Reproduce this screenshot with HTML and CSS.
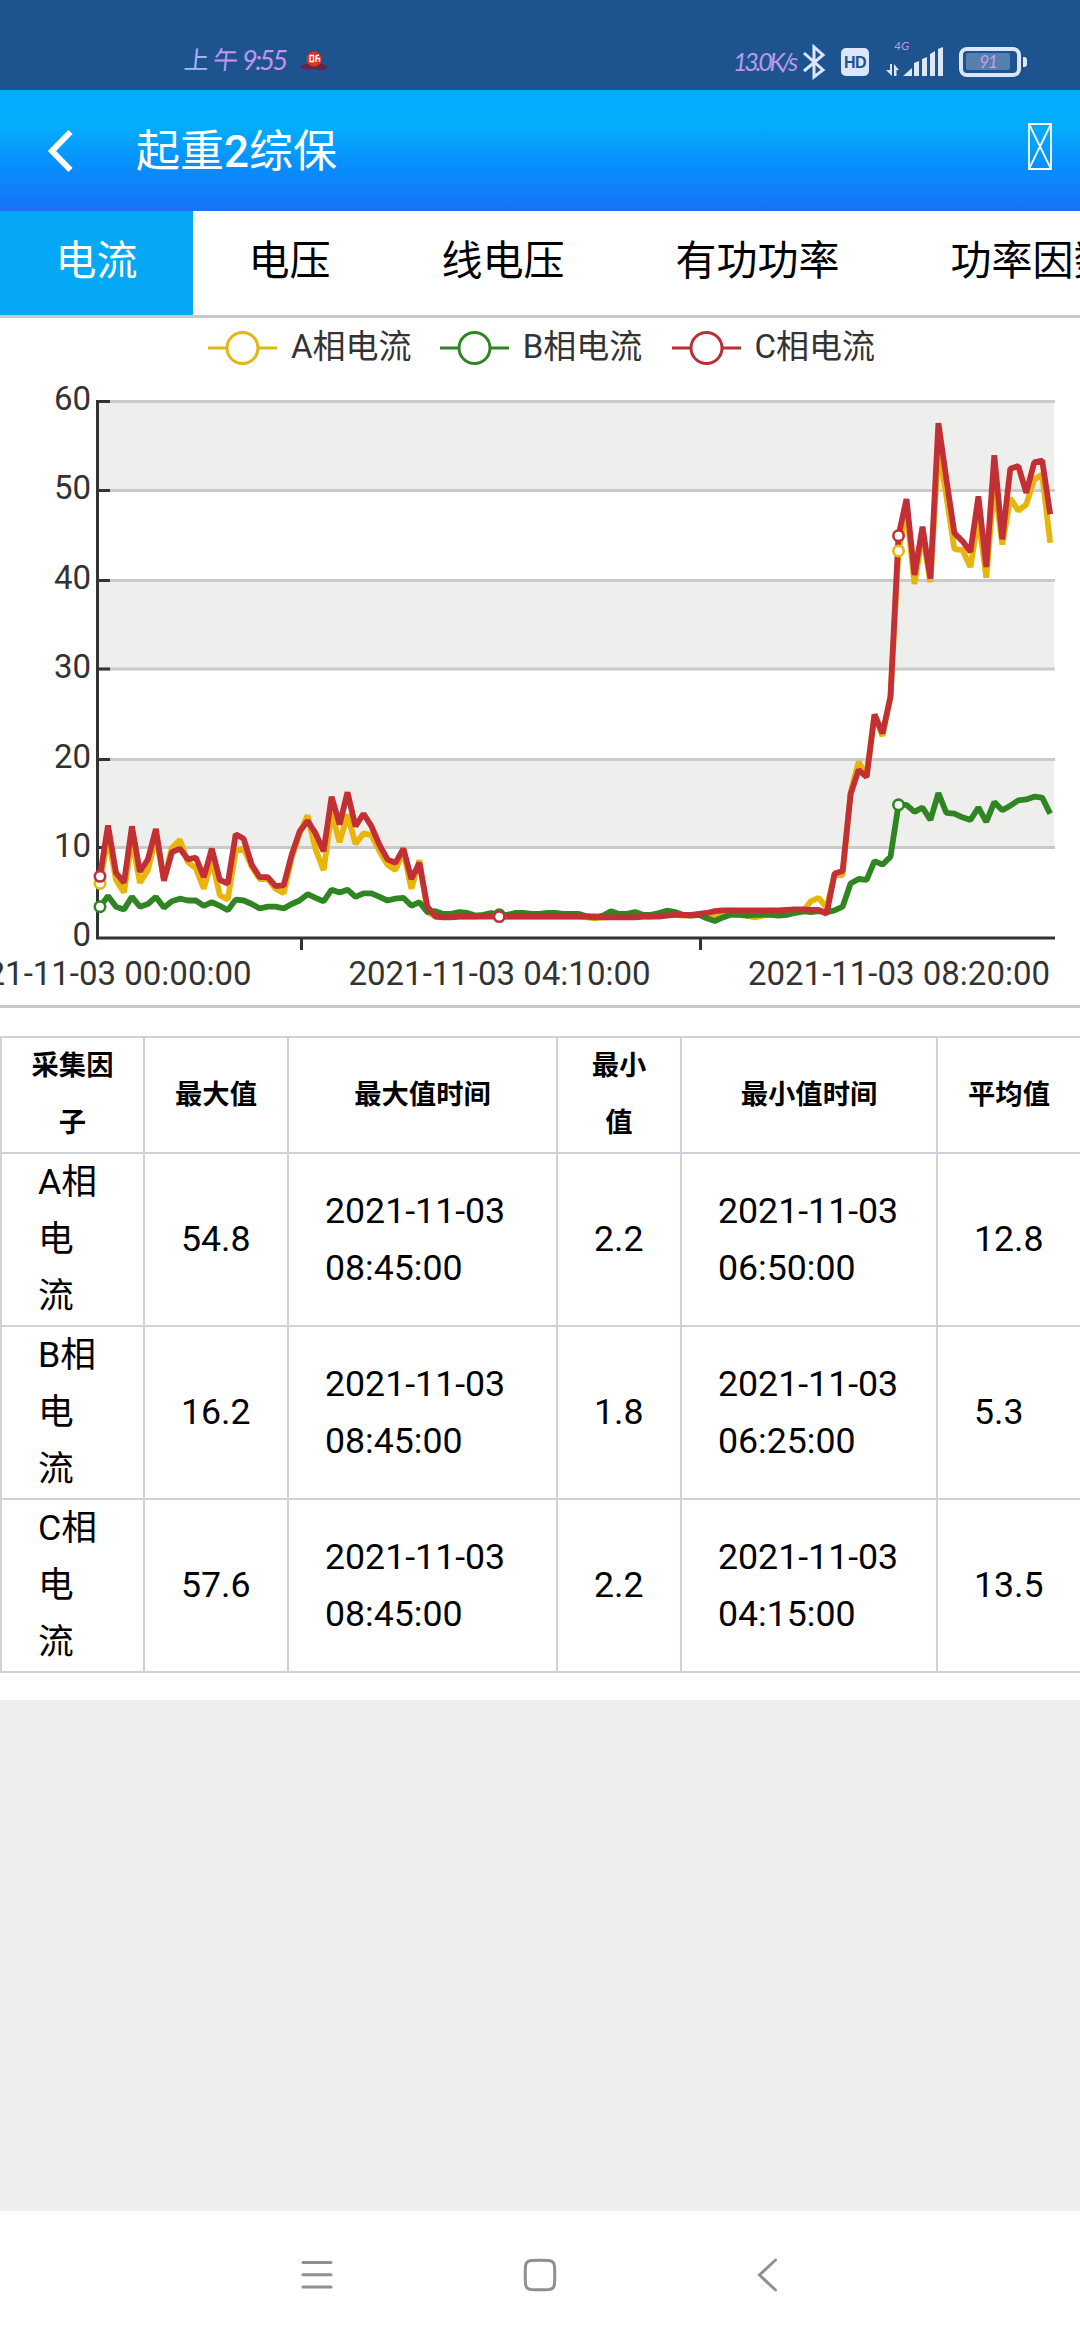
FILE: index.html
```html
<!DOCTYPE html>
<html lang="zh-CN">
<head>
<meta charset="utf-8">
<title>起重2综保</title>
<link rel="stylesheet" href="styles.css">
</head>
<body>
<div class="screen">
  <div class="status">
    <div class="clock"><span class="han">上</span><span class="han pink">午</span><span class="digits">9:55</span></div>
    <svg class="app-dot" width="30" height="24" viewBox="0 0 30 24">
      <path d="M1 17L6 15L23 15L29 18L26 21L4 20Z" fill="#6b2345"/>
      <circle cx="15" cy="10" r="7.5" fill="#e5301d"/>
      <path d="M11 6.5H14.5V12.5H11ZM20 6L17 7V13M17 9.5H20.5V13" fill="none" stroke="#fff" stroke-width="1.4"/>
    </svg>
    <div class="speed">13.0K/s</div>
    <svg class="bt" width="24" height="36" viewBox="0 0 24 36"><path d="M2 9L21 26L12 33V3L21 11L2 27" fill="none" stroke="#dce6fa" stroke-width="3"/></svg>
    <div class="hd">HD</div>
    <div class="signal">
      <span class="net">4G</span>
      <svg width="58" height="30" viewBox="0 0 58 30">
        <g fill="#dce6fa"><path d="M17 29L26 21V29Z"/><path d="M28 16L33 14V29H28ZM36 12L41 10V29H36ZM44 7L49 4V29H44ZM52 2L57 0V29H52Z"/>
        <path d="M4 17H6V29L0 23H4ZM8 29V17L13 23H10.500V29Z"/></g>
      </svg>
    </div>
    <div class="battery"><div class="level">91</div></div>
    <div class="cap"></div>
  </div>

  <div class="header">
    <svg class="back" width="30" height="44" viewBox="0 0 30 44"><path d="M25.500 3L7 22L25.500 41" fill="none" stroke="#fff" stroke-width="6"/></svg>
    <div class="title">起重<b>2</b>综保</div>
    <svg class="box" width="26" height="50" viewBox="0 0 26 50"><path d="M2 2H24V47H2ZL24 47M24 2L2 47" fill="none" stroke="#fff" stroke-width="1.8"/></svg>
  </div>

  <div class="tabs">
    <div class="tab active">电流</div><div class="tab">电压</div><div class="tab">线电压</div><div class="tab">有功功率</div><div class="tab">功率因数</div>
  </div>

  <div class="chart">
    <div class="legend">
      <div class="item"><svg width="70" height="36" viewBox="0 0 70 36"><path d="M0 18H69" stroke="#e0b713" stroke-width="3"/><circle cx="34.500" cy="18" r="15.500" fill="#fff" stroke="#e0b713" stroke-width="3"/></svg><span>A相电流</span></div>
      <div class="item"><svg width="70" height="36" viewBox="0 0 70 36"><path d="M0 18H69" stroke="#2f8424" stroke-width="3"/><circle cx="34.500" cy="18" r="15.500" fill="#fff" stroke="#2f8424" stroke-width="3"/></svg><span>B相电流</span></div>
      <div class="item"><svg width="70" height="36" viewBox="0 0 70 36"><path d="M0 18H69" stroke="#b92f37" stroke-width="3"/><circle cx="34.500" cy="18" r="15.500" fill="#fff" stroke="#b92f37" stroke-width="3"/></svg><span>C相电流</span></div>
    </div>
    <svg class="plot" width="1080" height="625" viewBox="0 380 1080 625">
      <g fill="#eeeeed"><rect x="98" y="401" width="956" height="89"/><rect x="98" y="580" width="956" height="89"/><rect x="98" y="759" width="956" height="89"/></g>
      <path class="grid" d="M98 401.500H1055M98 490.500H1055M98 580.500H1055M98 669H1055M98 759.500H1055M98 847.500H1055"/>
      <path class="axis" d="M97.500 400V939M96 938H1055M96 401.500H110M96 490.500H110M96 580.500H110M96 669H110M96 759.500H110M96 847.500H110M301.500 938V950M700.500 938V950"/>
      <g class="labels" text-anchor="end"><text x="91" y="410">60</text><text x="91" y="499">50</text><text x="91" y="589">40</text><text x="91" y="678">30</text><text x="91" y="767.500">20</text><text x="91" y="856.500">10</text><text x="91" y="946">0</text></g>
      <g class="labels" text-anchor="middle"><text x="100.500" y="984.500">2021-11-03 00:00:00</text><text x="499.500" y="984.500">2021-11-03 04:10:00</text><text x="899" y="984.500">2021-11-03 08:20:00</text></g>
      <g id="series"></g>
    </svg>
  </div>

  <div class="table-wrap">
    <table>
      <colgroup><col class="c1"><col class="c2"><col class="c3"><col class="c4"><col class="c5"><col class="c6"></colgroup>
      <tr class="head"><th>采集因<br>子</th><th>最大值</th><th>最大值时间</th><th>最小<br>值</th><th>最小值时间</th><th>平均值</th></tr>
      <tr><td>A相<br>电<br>流</td><td>54.8</td><td>2021-11-03<br>08:45:00</td><td>2.2</td><td>2021-11-03<br>06:50:00</td><td>12.8</td></tr>
      <tr><td>B相<br>电<br>流</td><td>16.2</td><td>2021-11-03<br>08:45:00</td><td>1.8</td><td>2021-11-03<br>06:25:00</td><td>5.3</td></tr>
      <tr><td>C相<br>电<br>流</td><td>57.6</td><td>2021-11-03<br>08:45:00</td><td>2.2</td><td>2021-11-03<br>04:15:00</td><td>13.5</td></tr>
    </table>
  </div>

  <div class="spacer"></div>

  <div class="nav">
    <svg width="36" height="36" viewBox="0 0 36 36"><path d="M4 5.500H32M4 17.800H32M4 30H32"/></svg>
    <svg width="36" height="36" viewBox="0 0 36 36"><path d="M9 3.500Q18 3 27 3.500Q32 4 32.500 9Q33 18 32.500 27Q32 32 27 32.500Q18 33 9 32.500Q4 32 3.500 27Q3 18 3.500 9Q4 4 9 3.500Z"/></svg>
    <svg width="36" height="36" viewBox="0 0 36 36"><path d="M30.500 3L14.500 18L30.500 33"/></svg>
  </div>
</div>
<script src="chart.js"></script>
</body>
</html>
```
FILE: styles.css
```css
* { box-sizing: border-box; }
body { margin: 0; background: #eee; font-family: Roboto, "Noto Sans CJK SC", sans-serif; }
svg { display: block; flex: none; }
.screen { width: 1080px; height: 2340px; display: flex; flex-direction: column; overflow: hidden; }

.status { height: 90px; flex: none; background: #1d548f; display: flex; align-items: flex-start; padding-left: 184px; }
.clock { display: flex; width: 118px; padding-top: 46px; color: #a3b8f2; line-height: 30px; white-space: nowrap; }
.clock .han { font-size: 25px; font-weight: 400; width: 29px; transform: skewX(-6deg); }
.clock .pink, .clock .digits { color: #c294ee; }
.clock .digits { font: italic 400 27px/28px Lato, sans-serif; letter-spacing: -2.5px; }
.app-dot { margin: 49px 0 0 -3px; }
.speed { width: 69px; margin: 45px 0 0 404px; font: italic 400 25px/32px Lato, sans-serif; letter-spacing: -3.2px; color: #b998ee; white-space: nowrap; }
.bt { margin: 44px 0 0 0; }
.hd { width: 28px; height: 28px; margin: 48px 0 0 15px; border-radius: 5px; background: #dce6fa; color: #1d548f; font: bold 16px/29px "Liberation Sans", sans-serif; text-align: center; letter-spacing: -.5px; }
.signal { width: 58px; margin: 39px 0 0 17px; }
.signal .net { display: block; height: 8px; padding-left: 8px; font: italic 400 12px/13px Lato, sans-serif; color: #c294ee; }
.battery { width: 62px; height: 30px; margin: 47px 0 0 15px; padding: 2px 3px; border: 4px solid #dce6fa; border-radius: 8px; }
.level { width: 44px; height: 17px; background: #5580ad; border-radius: 2px; text-align: center; font: italic 400 17px/17px Lato, sans-serif; letter-spacing: -1px; color: #c99df0; }
.cap { width: 4px; height: 10px; margin: 57px 0 0 2px; border-radius: 0 3px 3px 0; background: #dce6fa; }

.header { height: 121px; flex: none; display: flex; align-items: center; padding: 0 27px 0 45px; background: linear-gradient(#00adff 0, #04abfc 32%, #088ffd 62%, #1672f8 100%); }
.title { margin-left: 61px; padding-top: 3px; color: #fff; font-size: 44px; line-height: 60px; }
.title b { font-weight: 500; }
.box { margin: -8px 0 0 auto; }

.tabs { height: 107px; flex: none; display: flex; overflow: hidden; background: #fff; border-bottom: 3px solid #c8c8c8; }
.tab { flex: none; padding: 0 55.5px; font-size: 41px; line-height: 101px; height: 104px; color: #000; }
.tab.active { background: #05a8f4; color: #fff; }

.chart { height: 690px; flex: none; background: #fff; border-bottom: 3px solid #c8c8c8; }
.legend { height: 62px; display: flex; padding: 12px 0 0 208px; }
.item { display: flex; width: 231.8px; height: 36px; align-items: center; gap: 13px; font-size: 33px; line-height: 36px; color: #333; white-space: nowrap; }
.item span { padding-bottom: 2px; }
.grid { fill: none; stroke: #c9cbcb; stroke-width: 3; }
.axis { fill: none; stroke: #333; stroke-width: 3; }
.labels { font-size: 33px; fill: #333; }
.line { fill: none; stroke-width: 5.8; stroke-linejoin: bevel; }
.mark { fill: #fff; stroke-width: 2.6; }

.table-wrap { height: 692px; flex: none; padding-top: 28px; background: #fff; }
table { width: 1080px; border-collapse: collapse; table-layout: fixed; }
.c1 { width: 143px; } .c2 { width: 144px; } .c3 { width: 269px; } .c4 { width: 124px; } .c5 { width: 256px; } .c6 { width: 144px; }
th, td { border: 2px solid #d0d2da; padding: 0; color: #000; line-height: 57px; white-space: nowrap; }
tr { height: 173px; }
.head { height: 116px; }
th { font-size: 27.3px; font-weight: 700; text-align: center; }
td { font-size: 35.7px; padding-left: 36px; text-align: left; }

.spacer { flex: 1; background: #eee; }
.nav { height: 129px; flex: none; display: flex; gap: 187px; padding: 46px 0 0 299px; background: #fff; }
.nav svg { fill: none; stroke: #909090; stroke-width: 3; stroke-linecap: round; }
```
FILE: chart.js
```js
// Samples every 5 minutes, starting at 2021-11-03 00:00:00
const phases = [
  { color: '#e8b50a', data: [6.1,11.3,6.5,5.1,11,6.2,7.6,11.3,6.6,10.1,11,8.5,7.8,5.5,8.7,4.8,4.3,9.7,10,8,6.6,6.6,5.5,5,8.9,11.7,13.7,9.9,7.6,14,10.7,13.8,10.5,11.7,11.5,9.7,8.2,7.6,9.7,5.5,8.7,2.9,2.4,2.4,2.4,2.4,2.4,2.4,2.5,2.7,2.5,2.4,2.4,2.4,2.4,2.4,2.4,2.4,2.4,2.4,2.4,2.3,2.2,2.3,2.4,2.4,2.4,2.4,2.4,2.4,2.5,2.6,2.6,2.5,2.5,2.6,2.6,2.6,2.7,2.8,2.8,2.5,2.3,2.5,2.7,2.8,2.8,2.8,2.9,4.1,4.5,3.4,7.1,7,16.3,19.7,18.2,25,22.6,27,43.3,48,39.6,45.2,39.8,54.8,49.4,43.5,43.4,41.5,47,40.3,51,44,49.2,47.8,48.5,51.3,51.8,44.2] },
  { color: '#2e8522', data: [3.5,4.7,3.5,3.2,4.6,3.5,3.8,4.6,3.4,4.1,4.4,4.2,4.2,3.6,4,3.6,3.1,4.3,4.2,3.8,3.3,3.5,3.5,3.3,3.8,4.2,4.9,4.5,4.1,5.4,5.1,5.4,4.6,5,5,4.6,4.2,4.4,4.5,3.6,4,2.9,3,2.7,2.7,2.9,2.8,2.5,2.6,2.8,2.6,2.6,2.8,2.8,2.7,2.7,2.8,2.8,2.7,2.7,2.7,2.4,2.3,2.5,3,2.7,2.7,2.9,2.6,2.6,2.8,3.05,2.9,2.6,2.5,2.6,2.2,1.9,2.3,2.6,2.6,2.5,2.6,2.6,2.6,2.5,2.6,2.8,3,2.9,3,2.9,3.1,3.5,6.1,6.6,6.5,8.6,8.2,9.1,14.9,14.9,14.1,14.6,13.2,16.2,14,13.9,13.5,13.2,14.6,13,15.2,14.3,14.8,15.4,15.5,15.8,15.7,13.9] },
  { color: '#c23036', data: [6.9,12.6,7.3,6.2,12.5,7.4,8.8,12.2,6.4,9.6,10,8.8,9,6.8,10,6.5,6.1,11.6,11.1,8.2,6.8,6.8,5.8,5.9,9.3,11.9,13.1,11.7,9.7,15.8,12.7,16.3,12.5,13.9,12.5,10.4,8.8,8.4,10,6.6,8.4,3.5,2.4,2.3,2.3,2.4,2.4,2.4,2.4,2.4,2.4,2.4,2.4,2.4,2.4,2.4,2.4,2.4,2.4,2.4,2.4,2.4,2.4,2.3,2.3,2.3,2.3,2.3,2.4,2.4,2.4,2.5,2.6,2.6,2.6,2.7,2.8,3,3.1,3.1,3.1,3.1,3.1,3.1,3.1,3.1,3.15,3.2,3.2,3.15,3.15,2.7,7.2,7.5,16.1,18.8,18,25,22.9,27,45,49.1,40.6,46,40.2,57.6,51.3,45.3,44.4,43.2,49.4,41.5,54,44.6,52.5,52.8,49.8,53.2,53.4,47.4] }
];
const group = document.getElementById('series');
const x = i => 100 + 7.985 * i;
const y = v => 938 - 8.94 * v;
function add(tag, attrs) {
  const el = document.createElementNS('http://www.w3.org/2000/svg', tag);
  for (const key in attrs) el.setAttribute(key, attrs[key]);
  group.appendChild(el);
}
for (const p of phases) {
  add('polyline', { class: 'line', stroke: p.color, points: p.data.map((v, i) => x(i).toFixed(1) + ',' + y(v).toFixed(1)).join(' ') });
}
for (const p of phases) {
  for (const i of [0, 50, 100]) {
    add('circle', { class: 'mark', stroke: p.color, cx: x(i), cy: y(p.data[i]), r: 5.2 });
  }
}
```
